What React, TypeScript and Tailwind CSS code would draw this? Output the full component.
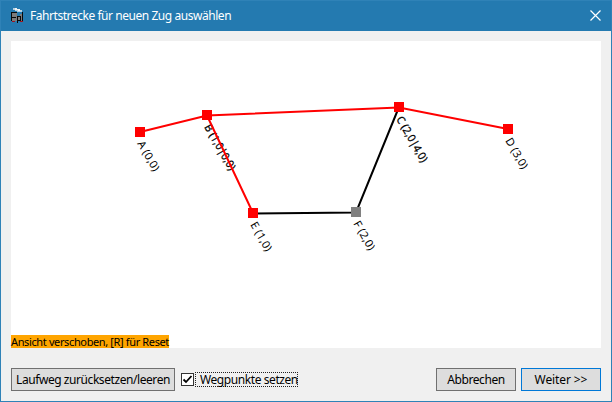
import React from "react";

type Station = { label: string; x: number; y: number; tx: number; ty: number; len: number; color: string; heavy?: boolean };

const stations: Station[] = [
  { label: "A (0,0)", x: 129, y: 91, tx: 126, ty: 102.5, len: 33, color: "#ff0000" },
  { label: "B (1,0|0,0)", x: 196, y: 74, tx: 193, ty: 86, len: 51, color: "#ff0000", heavy: true },
  { label: "C (2,0|4,0)", x: 388, y: 66, tx: 385, ty: 78, len: 51, color: "#ff0000", heavy: true },
  { label: "D (3,0)", x: 497, y: 88, tx: 494, ty: 99.5, len: 34, color: "#ff0000" },
  { label: "E (1,0)", x: 242, y: 172, tx: 239, ty: 183.5, len: 32, color: "#ff0000" },
  { label: "F (2,0)", x: 345, y: 171, tx: 342, ty: 182.5, len: 32, color: "#808080" },
];

function RouteMap() {
  return (
    <svg width="590" height="307" viewBox="0 0 590 307" className="block">
      {stations.map((s) => (
        <text
          key={s.label}
          transform={`translate(${s.tx} ${s.ty}) rotate(60)`}
          textLength={s.len}
          lengthAdjust="spacingAndGlyphs"
          className={s.heavy ? "text-[11px] stroke-black stroke-[0.25px]" : "text-[11px]"}
        >
          {s.label}
        </text>
      ))}
      <g strokeWidth="2" fill="none">
        <path d="M242 172.5L345 171.5L388 66" stroke="#000" />
        <path d="M129 91L196 74.5L388 66.5L497 88M196 74.5L242 172" stroke="#f00" />
      </g>
      {stations.map((s) => (
        <rect key={s.label} x={s.x - 5} y={s.y - 5} width="10" height="10" fill={s.color} />
      ))}
    </svg>
  );
}

function AppIcon() {
  return (
    <svg width="13" height="18" viewBox="0 0 13 18" shapeRendering="crispEdges">
      <path d="M1 6h5v8H1zM6 9h5v5H6zM9 7h3v7H9z" fill="#7c7c7c" />
      <path d="M2 1h4v1h3v1h2v2H6V4H4V3H2z" fill="#b4d0e2" />
      <path d="M4 1h2v1h3v2H7V3H4z" fill="#f0f3f3" />
      <path d="M0 5h6v1H1v4h4v1H1v3H0zM6 9h4v1H7v3h3v1H7v2H6zM9 10h1v3H9zM11 5h1v9h-1z" fill="#080808" />
      <path d="M1 14h3v1H1zM9 14h3v1H9z" fill="#a01520" />
    </svg>
  );
}

function Button({ width, label, tracking, primary = false }: { width: string; label: string; tracking: string; primary?: boolean }) {
  return (
    <button className={`flex h-[23px] shrink-0 items-center justify-center border bg-[#dddddd] ${width} ${primary ? "border-[#0078d7]" : "border-[#707070]"}`}>
      <Label text={label} className={tracking} />
    </button>
  );
}

function Label({ text, className }: { text: string; className: string }) {
  return <span className={`block whitespace-nowrap text-[12px] leading-[17px] ${className}`}>{text}</span>;
}

export default function App() {
  return (
    <div className="flex h-[402px] w-[612px] flex-col overflow-hidden border border-[#2f82b7] bg-[#f0f0f0] font-['Noto_Sans',sans-serif] text-black">
      <header className="flex h-[30px] shrink-0 items-center justify-between bg-[#247ab0] px-[10px] text-white">
        <div className="flex items-center gap-[6px]">
          <AppIcon />
          <span className="whitespace-nowrap text-[12px] leading-[16px] tracking-[-0.45px]">Fahrtstrecke für neuen Zug auswählen</span>
        </div>
        <svg width="11" height="11" viewBox="0 0 11 11" aria-label="Schließen" className="relative -top-px">
          <path d="M.5.5l10 10M10.5.5l-10 10" stroke="#fff" strokeWidth="1.2" />
        </svg>
      </header>
      <main className="relative mx-[10px] mt-[10px] h-[307px] w-[590px] shrink-0 bg-white">
        <RouteMap />
        <div className="absolute bottom-0 left-0 h-[13px] w-[158px] whitespace-nowrap bg-[#ffa500] text-[11px] leading-[13px] tracking-[-0.37px]">Ansicht verschoben, [R] für Reset</div>
      </main>
      <footer className="mx-[10px] mt-[20px] flex h-[23px] items-center">
        <Button width="w-[164px]" label="Laufweg zurücksetzen/leeren" tracking="tracking-[-0.43px]" />
        <label className="ml-[6px] flex items-center">
          <span className="flex h-[13px] w-[13px] items-center justify-center border border-[#333] bg-white">
            <svg width="11" height="11" viewBox="0 0 11 11" className="shrink-0">
              <path d="M1.5 5.5L4 8l5.5-6" fill="none" stroke="#000" strokeWidth="1.8" />
            </svg>
          </span>
          <span className="ml-px flex h-[15px] w-[103px] items-center border border-dotted border-[#222] pl-[4px]">
            <Label text="Wegpunkte setzen" className="tracking-[-0.42px]" />
          </span>
        </label>
        <div className="ml-auto flex gap-[5px]">
          <Button width="w-[80px]" label="Abbrechen" tracking="tracking-[-0.42px]" />
          <Button width="w-[80px]" label="Weiter >>" tracking="tracking-[-0.1px]" primary />
        </div>
      </footer>
    </div>
  );
}
